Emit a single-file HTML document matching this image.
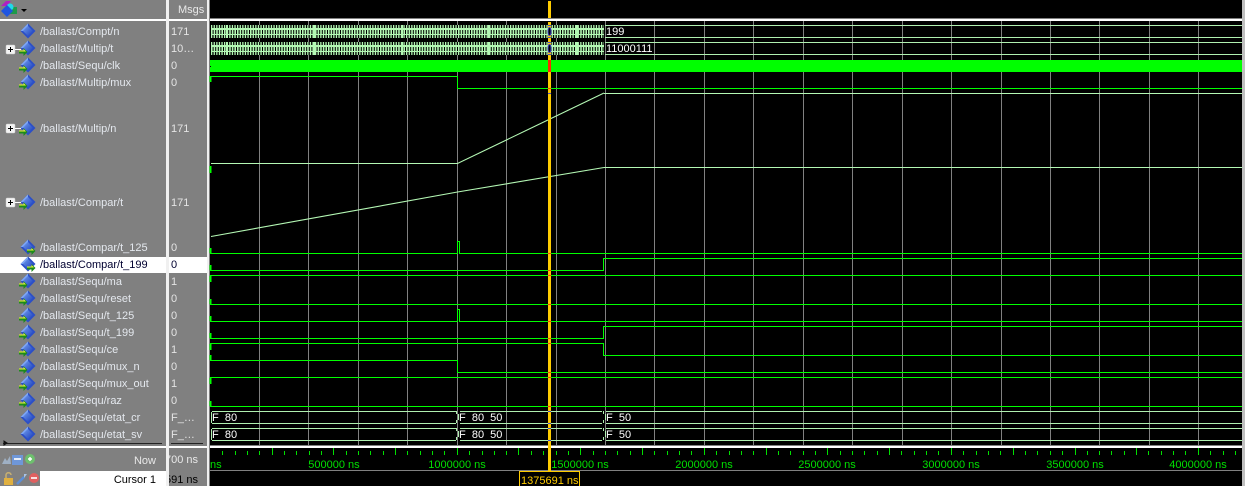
<!DOCTYPE html>
<html><head><meta charset="utf-8"><style>
html,body{margin:0;padding:0;background:#000;width:1245px;height:486px;overflow:hidden}
svg{display:block}
text{font-family:"Liberation Sans",sans-serif;font-size:11px}
.n{fill:#e4e8ee}.v{fill:#e4e4e4}.t{fill:#00e000;text-anchor:middle}.b{fill:#fff}
</style></head><body>
<svg width="1245" height="486" viewBox="0 0 1245 486" xmlns="http://www.w3.org/2000/svg">
<defs>
<linearGradient id="dg" x1="0" y1="0" x2="1" y2="1"><stop offset="0" stop-color="#6f9bf0"/><stop offset="1" stop-color="#1d3fb8"/></linearGradient>
<symbol id="d" viewBox="0 0 16 16" overflow="visible">
<path d="M8 0.5L15.5 8L8 15.5L0.5 8Z" fill="#2b4fc8"/>
<path d="M8 3L13 8L8 13L3 8Z" fill="url(#dg)"/>
<path d="M8 0.5L0.5 8L3 8L8 3Z" fill="#7da6f5"/>
</symbol>
<symbol id="a" viewBox="0 0 9 8" overflow="visible">
<path d="M0 2.5H4.5V0L8.5 4L4.5 8V5.5H0Z" fill="#1c8a1c"/>
<path d="M0 2.5H4.5V1L7 3.5H0Z" fill="#e8f830"/>
</symbol>
<symbol id="p" viewBox="0 0 15 10" overflow="visible">
<rect x="0" y="0" width="9" height="9" rx="1" fill="#f4f4f4" stroke="#c8c8c8" stroke-width=".5"/>
<path d="M2 4.5H7M4.5 2V7" stroke="#000" stroke-width="1" fill="none"/>
<path d="M9 4.5H15" stroke="#fff" stroke-width="1" fill="none"/>
</symbol>
</defs>

<!-- panels -->
<g shape-rendering="crispEdges">
<rect x="0" y="0" width="210" height="486" fill="#808080"/>
<rect x="0" y="19" width="207" height="2" fill="#fff"/>
<rect x="0" y="446" width="207" height="2" fill="#fff"/>
<rect x="166" y="0" width="3" height="486" fill="#f0f0f0"/>
<rect x="207" y="0" width="2" height="486" fill="#f0f0f0"/>
<rect x="209" y="0" width="1" height="486" fill="#808080"/>
<rect x="0" y="257" width="166" height="16" fill="#fff"/>
<rect x="169" y="257" width="38" height="16" fill="#fff"/>
<rect x="40" y="471" width="126" height="15" fill="#fff"/>
<rect x="3" y="443" width="159" height="1" fill="#222"/>
<rect x="171" y="443" width="32" height="1" fill="#222"/>
<rect x="1242" y="0" width="3" height="486" fill="#c0c0c0"/>
<rect x="210" y="18" width="1032" height="1" fill="#808080"/>
<rect x="210" y="19" width="1032" height="2" fill="#fff"/>
<rect x="210" y="445" width="1032" height="1" fill="#808080"/>
<rect x="210" y="446" width="1032" height="2" fill="#fff"/>
<rect x="210" y="470" width="1032" height="1" fill="#808080"/>
</g>

<!-- header icon -->
<path d="M1 6L6 1L11 1L7 6Z" fill="#b020c0"/>
<rect x="6" y="7" width="11" height="7" fill="#1f9a4a"/>
<circle cx="10" cy="7" r="3.5" fill="#20d8e8"/>
<path d="M7 5L13 11L7 17L1 11Z" fill="#1f55e0"/>
<path d="M21 9H27L24 12Z" fill="#000"/>
<text x="178" y="13" fill="#e8e8e8">Msgs</text>

<!-- grid -->
<path shape-rendering="crispEdges" stroke="#808080" fill="none" d="M259.5 21V445M308.5 21V445M358.5 21V445M407.5 21V445M457.5 21V445M506.5 21V445M556.5 21V445M605.5 21V445M654.5 21V445M704.5 21V445M753.5 21V445M803.5 21V445M852.5 21V445M902.5 21V445M951.5 21V445M1001.5 21V445M1050.5 21V445M1099.5 21V445M1149.5 21V445M1198.5 21V445"/>

<!-- buses -->
<g fill="none" stroke="#b4f8b4">
<rect x="211" y="25" width="393" height="13" fill="#000" stroke="none"/>
<rect x="211" y="42" width="393" height="13" fill="#000" stroke="none"/>
<path d="M211 26.5H604M211 36.5H604M211 43.5H604M211 53.5H604" stroke-width="3" stroke-dasharray="1.3 1.3"/>
<path d="M211 32H604M211 49H604" stroke-width="4" stroke-dasharray="1.6 1"/>
<path d="M211 29H604M211 46H604" stroke-width="2"/>
<path d="M211 34.5H604M211 51.5H604" stroke-width="1"/>
</g>
<g shape-rendering="crispEdges">
<path fill="#b4f8b4" d="M226 25h2v13h-2zM313 25h2v13h-2zM401 25h2v13h-2zM488 25h2v13h-2zM576 25h2v13h-2zM226 42h2v13h-2zM313 42h2v13h-2zM401 42h2v13h-2zM488 42h2v13h-2zM576 42h2v13h-2z"/>
<path stroke="#b0f0b0" fill="none" d="M605 25.5H1242M605 37.5H1242M605 42.5H1242M605 54.5H1242"/>
<rect x="210" y="60" width="1032" height="12" fill="#00ff00"/>
<rect x="210" y="66" width="1" height="1" fill="#000"/>
</g>
<text class="b" x="606" y="35">199</text>
<text class="b" x="606" y="52">11000111</text>

<!-- logic traces -->
<g fill="none" stroke="#00ff00" shape-rendering="crispEdges">
<path d="M211 76.5H457.5V88.5H1242"/>
<path d="M210 253.5H457.5V241.5H459.5V253.5H1242"/>
<path d="M210 270.5H603.5V258.5H1242"/>
<path d="M210 275.5H1242"/>
<path d="M210 304.5H1242"/>
<path d="M210 321.5H457.5V309.5H459.5V321.5H1242"/>
<path d="M210 338.5H603.5V326.5H1242"/>
<path d="M210 343.5H603.5V355.5H1242"/>
<path d="M210 360.5H457.5V372.5H1242"/>
<path d="M210 377.5H1242"/>
<path d="M210 406.5H1242"/>
<path d="M210.5 76V82M210.5 166V173M210.5 248V253M210.5 265V270M210.5 276V282M210.5 299V304M210.5 316V321M210.5 333V338M210.5 344V350M210.5 355V360M210.5 378V384M210.5 401V406" stroke-width="2"/>
</g>

<!-- analog traces -->
<g fill="none" stroke="#b4f8b4">
<path d="M211 163.5H457.5L604 93" stroke-width="1.1"/>
<path shape-rendering="crispEdges" d="M604 93.5H1242M604 167.5H1242"/>
<path d="M211 236.5L457.5 192L604 167.5" stroke-width="1.1"/>
</g>

<!-- enum buses -->
<g fill="none" stroke="#b0f0b0" shape-rendering="crispEdges">
<path d="M212 411.5H456M212 423.5H456M460 411.5H602M460 423.5H602M606 411.5H1242M606 423.5H1242"/>
<path d="M212 428.5H456M212 440.5H456M460 428.5H602M460 440.5H602M606 428.5H1242M606 440.5H1242"/>
<path d="M211.5 412V423M211.5 429V440"/>
<path d="M456.5 411V414M458.5 414V420M456.5 420V423M456.5 428V431M458.5 431V437M456.5 437V440"/>
<path d="M603.5 411V414M605.5 414V420M603.5 420V423M603.5 428V431M605.5 431V437M603.5 437V440"/>
</g>
<text class="b" xml:space="preserve" x="212" y="421">F  80</text>
<text class="b" xml:space="preserve" x="212" y="438">F  80</text>
<text class="b" xml:space="preserve" x="459" y="421">F  80  50</text>
<text class="b" xml:space="preserve" x="459" y="438">F  80  50</text>
<text class="b" xml:space="preserve" x="606" y="421">F  50</text>
<text class="b" xml:space="preserve" x="606" y="438">F  50</text>

<!-- cursor -->
<g shape-rendering="crispEdges">
<rect x="548" y="1" width="3" height="17" fill="#ffcc00"/>
<rect x="548" y="22" width="3" height="449" fill="#ffcc00"/>
<rect x="548" y="60" width="3" height="12" fill="#ff2a00"/>
<path fill="#ff3c00" d="M548 88h3v1h-3zM548 253h3v1h-3zM548 270h3v1h-3zM548 275h3v1h-3zM548 304h3v1h-3zM548 321h3v1h-3zM548 338h3v1h-3zM548 343h3v1h-3zM548 372h3v1h-3zM548 377h3v1h-3zM548 406h3v1h-3z"/>
<path fill="#4848c8" d="M548 411h3v1h-3zM548 423h3v1h-3zM548 428h3v1h-3zM548 440h3v1h-3zM548 93h3v1h-3zM548 25h3v1h-3zM548 37h3v1h-3zM548 42h3v1h-3zM548 54h3v1h-3z"/>
</g>
<ellipse cx="549.5" cy="31.5" rx="1.5" ry="4" fill="#000" stroke="#3a3ac0"/>
<ellipse cx="549.5" cy="48.5" rx="1.5" ry="4" fill="#000" stroke="#3a3ac0"/>

<!-- timeline ticks -->
<path shape-rendering="crispEdges" stroke="#00e000" fill="none" d="M222.5 451V455M235.5 451V455M247.5 451V455M259.5 451V455M284.5 451V455M296.5 451V455M309.5 451V455M321.5 451V455M346.5 451V455M358.5 451V455M370.5 451V455M383.5 451V455M407.5 451V455M420.5 451V455M432.5 451V455M444.5 451V455M469.5 451V455M482.5 451V455M494.5 451V455M506.5 451V455M531.5 451V455M543.5 451V455M556.5 451V455M568.5 451V455M593.5 451V455M605.5 451V455M617.5 451V455M630.5 451V455M654.5 451V455M667.5 451V455M679.5 451V455M691.5 451V455M716.5 451V455M729.5 451V455M741.5 451V455M753.5 451V455M778.5 451V455M790.5 451V455M803.5 451V455M815.5 451V455M840.5 451V455M852.5 451V455M864.5 451V455M877.5 451V455M901.5 451V455M914.5 451V455M926.5 451V455M938.5 451V455M963.5 451V455M976.5 451V455M988.5 451V455M1000.5 451V455M1025.5 451V455M1037.5 451V455M1050.5 451V455M1062.5 451V455M1087.5 451V455M1099.5 451V455M1111.5 451V455M1124.5 451V455M1148.5 451V455M1161.5 451V455M1173.5 451V455M1185.5 451V455M1210.5 451V455M1223.5 451V455M1235.5 451V455M272.5 448V455M333.5 448V455M395.5 448V455M457.5 448V455M518.5 448V455M580.5 448V455M642.5 448V455M704.5 448V455M766.5 448V455M827.5 448V455M889.5 448V455M951.5 448V455M1013.5 448V455M1075.5 448V455M1136.5 448V455M1198.5 448V455"/>
<text x="210" y="468" fill="#00e000">ns</text>
<text class="t" x="334" y="468">500000 ns</text>
<text class="t" x="457" y="468">1000000 ns</text>
<text class="t" x="580" y="468">1500000 ns</text>
<text class="t" x="704" y="468">2000000 ns</text>
<text class="t" x="827" y="468">2500000 ns</text>
<text class="t" x="951" y="468">3000000 ns</text>
<text class="t" x="1075" y="468">3500000 ns</text>
<text class="t" x="1198" y="468">4000000 ns</text>
<rect x="519.5" y="471.5" width="60" height="16" fill="#000" stroke="#ffcc00"/>
<text x="521" y="484" fill="#ffcc00">1375691 ns</text>

<!-- icons -->
<use href="#d" x="20" y="23" width="16" height="16"/>
<use href="#d" x="20" y="40" width="16" height="16"/>
<use href="#d" x="20" y="57" width="16" height="16"/>
<use href="#d" x="20" y="74" width="16" height="16"/>
<use href="#d" x="20" y="120" width="16" height="16"/>
<use href="#d" x="20" y="194" width="16" height="16"/>
<use href="#d" x="20" y="239" width="16" height="16"/>
<use href="#d" x="20" y="256" width="16" height="16"/>
<use href="#d" x="20" y="273" width="16" height="16"/>
<use href="#d" x="20" y="290" width="16" height="16"/>
<use href="#d" x="20" y="307" width="16" height="16"/>
<use href="#d" x="20" y="324" width="16" height="16"/>
<use href="#d" x="20" y="341" width="16" height="16"/>
<use href="#d" x="20" y="358" width="16" height="16"/>
<use href="#d" x="20" y="375" width="16" height="16"/>
<use href="#d" x="20" y="392" width="16" height="16"/>
<use href="#d" x="20" y="409" width="16" height="16"/>
<use href="#d" x="20" y="426" width="16" height="16"/>
<use href="#a" x="19" y="48" width="9" height="8"/>
<use href="#a" x="19" y="65" width="9" height="8"/>
<use href="#a" x="19" y="82" width="9" height="8"/>
<use href="#a" x="19" y="128" width="9" height="8"/>
<use href="#a" x="19" y="202" width="9" height="8"/>
<use href="#a" x="27" y="247" width="9" height="8"/>
<use href="#a" x="27" y="264" width="9" height="8"/>
<use href="#a" x="19" y="281" width="9" height="8"/>
<use href="#a" x="19" y="298" width="9" height="8"/>
<use href="#a" x="19" y="315" width="9" height="8"/>
<use href="#a" x="19" y="332" width="9" height="8"/>
<use href="#a" x="19" y="349" width="9" height="8"/>
<use href="#a" x="19" y="366" width="9" height="8"/>
<use href="#a" x="19" y="383" width="9" height="8"/>
<use href="#a" x="19" y="400" width="9" height="8"/>
<use href="#p" x="6" y="45" width="15" height="10"/>
<use href="#p" x="6" y="124" width="15" height="10"/>
<use href="#p" x="6" y="198" width="15" height="10"/>

<!-- names -->
<text class="n" x="40" y="35">/ballast/Compt/n</text>
<text class="n" x="40" y="52">/ballast/Multip/t</text>
<text class="n" x="40" y="69">/ballast/Sequ/clk</text>
<text class="n" x="40" y="86">/ballast/Multip/mux</text>
<text class="n" x="40" y="132">/ballast/Multip/n</text>
<text class="n" x="40" y="206">/ballast/Compar/t</text>
<text class="n" x="40" y="251">/ballast/Compar/t_125</text>
<text x="40" y="268" fill="#000030">/ballast/Compar/t_199</text>
<text class="n" x="40" y="285">/ballast/Sequ/ma</text>
<text class="n" x="40" y="302">/ballast/Sequ/reset</text>
<text class="n" x="40" y="319">/ballast/Sequ/t_125</text>
<text class="n" x="40" y="336">/ballast/Sequ/t_199</text>
<text class="n" x="40" y="353">/ballast/Sequ/ce</text>
<text class="n" x="40" y="370">/ballast/Sequ/mux_n</text>
<text class="n" x="40" y="387">/ballast/Sequ/mux_out</text>
<text class="n" x="40" y="404">/ballast/Sequ/raz</text>
<text class="n" x="40" y="421">/ballast/Sequ/etat_cr</text>
<text class="n" x="40" y="438">/ballast/Sequ/etat_sv</text>

<!-- values -->
<text class="v" x="171" y="35">171</text>
<text class="v" x="171" y="52">10…</text>
<text class="v" x="171" y="69">0</text>
<text class="v" x="171" y="86">0</text>
<text class="v" x="171" y="132">171</text>
<text class="v" x="171" y="206">171</text>
<text class="v" x="171" y="251">0</text>
<text x="171" y="268" fill="#000030">0</text>
<text class="v" x="171" y="285">1</text>
<text class="v" x="171" y="302">0</text>
<text class="v" x="171" y="319">0</text>
<text class="v" x="171" y="336">0</text>
<text class="v" x="171" y="353">1</text>
<text class="v" x="171" y="370">0</text>
<text class="v" x="171" y="387">1</text>
<text class="v" x="171" y="404">0</text>
<text class="v" x="171" y="421">F_…</text>
<text class="v" x="171" y="438">F_…</text>

<!-- bottom left -->
<path d="M4 441V445M4 441L7 443L4 445Z" stroke="#111" fill="#111"/>
<g>
<path d="M2 464L5 458L7 461L10 456L11 464Z" fill="#9fb0c4"/>
<rect x="12" y="455" width="11" height="10" fill="#6f97d8"/>
<rect x="14" y="458" width="7" height="2" fill="#e8eef8"/>
<circle cx="30" cy="459" r="5" fill="#6ec06e"/>
<path d="M28 459H32M30 457V461" stroke="#fff" stroke-width="1.4"/>
<rect x="4" y="478" width="9" height="7" fill="#e0b040"/>
<path d="M6 478V475C6 472 11 472 11 475" stroke="#c8b070" stroke-width="1.5" fill="none"/>
<path d="M17 484L24 477" stroke="#5c8fd8" stroke-width="2.5"/>
<path d="M24 474L27 474L24 478Z" fill="#a8c4e8"/>
<circle cx="34" cy="478" r="5" fill="#e06060"/>
<path d="M31 478H37" stroke="#fff" stroke-width="1.6"/>
</g>
<text x="156" y="464" text-anchor="end" fill="#e8e8e8">Now</text>
<text x="156" y="483" text-anchor="end" fill="#000">Cursor 1</text>
<svg x="169" y="448" width="38" height="38" viewBox="169 448 38 38">
<text x="198" y="463" text-anchor="end" fill="#e8e8e8">700 ns</text>
<text x="198" y="483" text-anchor="end" fill="#000">591 ns</text>
</svg>
</svg>
</body></html>
